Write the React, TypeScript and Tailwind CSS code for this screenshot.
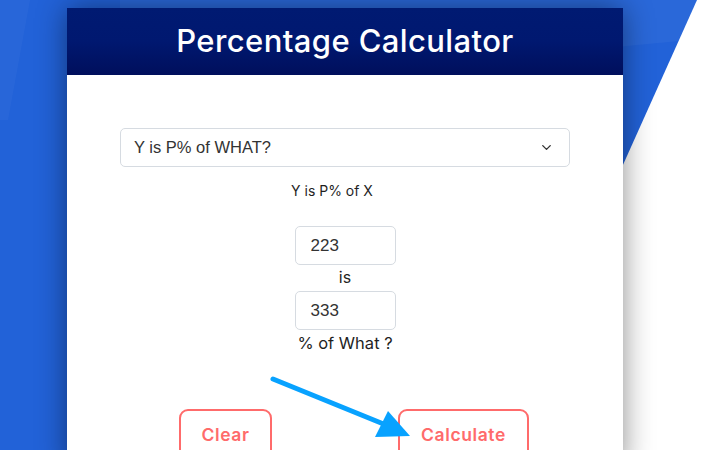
import { ChevronDown } from 'lucide-react'

const label = "font-['Inter',sans-serif] text-[#1f1f1f]"
const field = "font-['Liberation_Sans',Arial,sans-serif] text-[#333]"
const action =
  "h-[52px] border-2 border-[#ff6b6b] rounded-[9px] flex justify-center pt-[11px] font-['Inter',sans-serif] font-semibold text-[17.5px] tracking-[0.6px] text-[#ff6b6b]"

function PointerArrow() {
  return (
    <svg className="absolute left-0 top-0 pointer-events-none" width="720" height="450" viewBox="0 0 720 450">
      <line x1="273" y1="379" x2="386" y2="425" stroke="#08a2ff" strokeWidth="5" strokeLinecap="round" />
      <polygon points="388,411 375,437 410,436" fill="#08a2ff" />
    </svg>
  )
}

export default function App() {
  return (
    <div className="relative w-[720px] h-[450px] overflow-hidden bg-[#2262d8]">
      {/* Background streaks */}
      <div className="absolute inset-0 bg-white/[0.03] [clip-path:polygon(0_0,30px_0,8px_120px,0_120px)]"></div>
      <div className="absolute inset-0 bg-white/[0.04] [clip-path:polygon(120px_0,700px_0,690px_40px,480px_60px,120px_30px)]"></div>
      <div className="absolute inset-0 bg-white [clip-path:polygon(697px_0,720px_0,720px_450px,495px_450px)]"></div>

      <div className="relative ml-[67px] mt-[8px] w-[556px] h-[460px] bg-white shadow-[0_0_28px_rgba(0,0,0,0.45)]">
        <div className="h-[67px] flex items-center justify-center bg-gradient-to-b from-[#001a72] via-[#001870] to-[#000f5c]">
          <h1 className="font-['Inter',sans-serif] text-white text-[31px] font-medium tracking-[0.4px] -mt-[1px]">
            Percentage Calculator
          </h1>
        </div>

        <div className="flex flex-col items-center pt-[53px]">
          <div className="w-[450px] h-[39px] flex items-center justify-between pl-[13px] pr-[15px] border border-[#d6dbe1] rounded-[5px]">
            <span className={`${field} text-[16.5px]`}>Y is P% of WHAT?</span>
            <ChevronDown size={15} strokeWidth={2.2} className="text-[#333]" />
          </div>

          <div className={`${label} text-[14px] mt-[15px] leading-[18px] mr-[26px]`}>Y is P% of X</div>

          <div className="w-[101px] h-[39px] mt-[26px] flex items-center pl-[15px] border border-[#d6dbe1] rounded-[5px]">
            <span className={`${field} text-[17px]`}>223</span>
          </div>
          <div className={`${label} text-[16px] leading-[20px] mt-[2px]`}>is</div>
          <div className="w-[101px] h-[39px] mt-[4px] flex items-center pl-[15px] border border-[#d6dbe1] rounded-[5px]">
            <span className={`${field} text-[17px]`}>333</span>
          </div>
          <div className={`${label} text-[16.5px] leading-[20px] mt-[3px]`}>% of What ?</div>
        </div>

        <div className="flex pl-[112px] gap-[126px] mt-[56px]">
          <button className={`w-[93px] ${action}`}>Clear</button>
          <button className={`w-[131px] ${action}`}>Calculate</button>
        </div>
      </div>

      <PointerArrow />
    </div>
  )
}
